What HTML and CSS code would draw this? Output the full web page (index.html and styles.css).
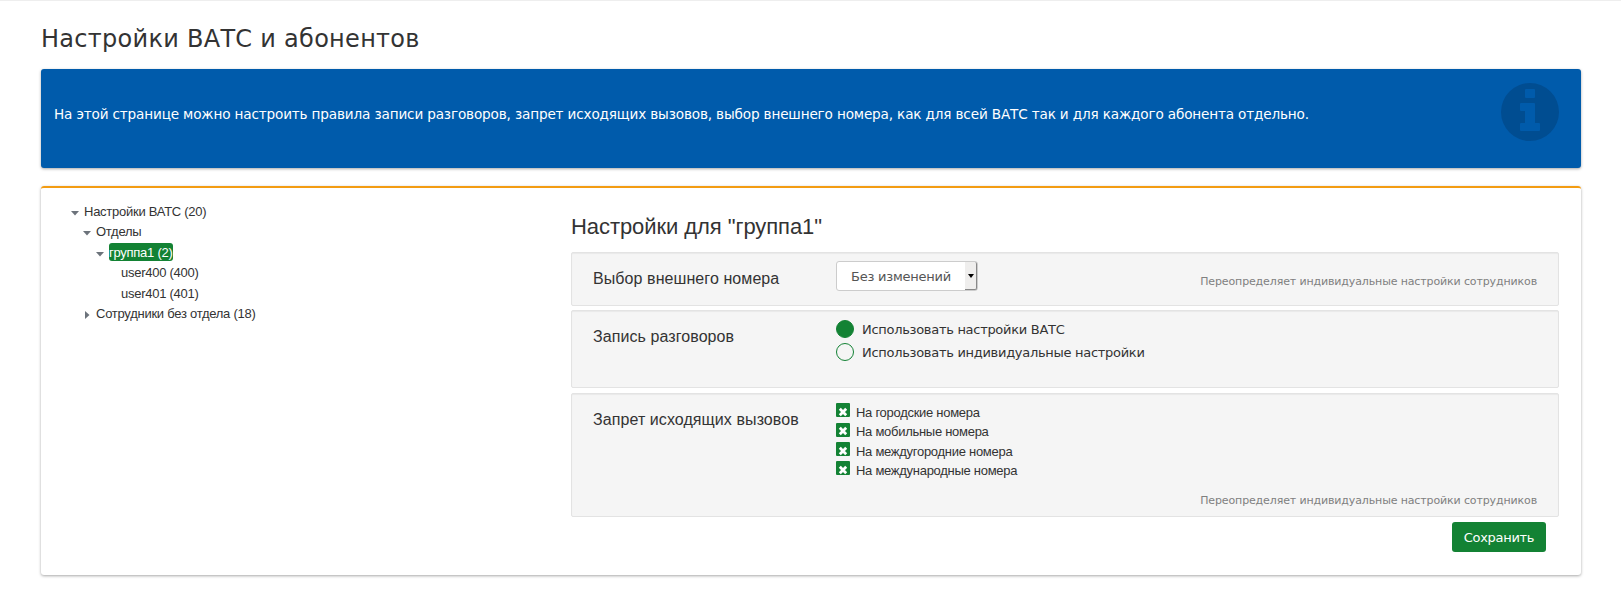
FILE: index.html
```html
<!DOCTYPE html>
<html lang="ru">
<head>
<meta charset="utf-8">
<title>Настройки ВАТС и абонентов</title>
<link rel="stylesheet" href="styles.css">
</head>
<body>
<main class="page">
  <h1 class="page-title">Настройки ВАТС и абонентов</h1>
  <section class="info">
    <p class="info-text">На этой странице можно настроить правила записи разговоров, запрет исходящих вызовов, выбор внешнего номера, как для всей ВАТС так и для каждого абонента отдельно.</p>
    <svg class="info-icon" viewBox="0 0 58 58"><path fill-rule="evenodd" d="M29 0a29 29 0 1 0 0 58a29 29 0 1 0 0-58zM25 6h8q1 0 1 1v7q0 1-1 1h-8q-1 0-1-1V7q0-1 1-1zM20 20h13q1 0 1 1v19h4q1 0 1 1v6q0 1-1 1H20q-1 0-1-1v-6q0-1 1-1h4V28h-4q-1 0-1-1v-6q0-1 1-1z"/></svg>
  </section>
  <section class="panel">
    <ul class="tree">
      <li class="node"><svg class="arrow" viewBox="0 0 8 10"><path d="M0 3h8L4 7.5z"/></svg><span>Настройки ВАТС (20)</span></li>
      <li class="node level-1"><svg class="arrow" viewBox="0 0 8 10"><path d="M0 3h8L4 7.5z"/></svg><span>Отделы</span></li>
      <li class="node level-2"><svg class="arrow" viewBox="0 0 8 10"><path d="M0 3h8L4 7.5z"/></svg><span class="selected">группа1 (2)</span></li>
      <li class="node level-3"><span>user400 (400)</span></li>
      <li class="node level-3"><span>user401 (401)</span></li>
      <li class="node level-1"><svg class="arrow" viewBox="0 0 8 10"><path d="M2 1v8l4.5-4z"/></svg><span>Сотрудники без отдела (18)</span></li>
    </ul>
    <div class="settings">
      <h2 class="settings-title">Настройки для "группа1"</h2>
      <div class="well number">
        <h3 class="label">Выбор внешнего номера</h3>
        <div class="select"><span class="select-text">Без изменений</span><span class="select-button"><svg class="caret" viewBox="0 0 6 4"><path d="M0 0h6L3 4z"/></svg></span></div>
        <p class="note">Переопределяет индивидуальные настройки сотрудников</p>
      </div>
      <div class="well record">
        <h3 class="label">Запись разговоров</h3>
        <div class="radios">
          <div class="radio"><i class="dot on"></i><span>Использовать настройки ВАТС</span></div>
          <div class="radio"><i class="dot"></i><span>Использовать индивидуальные настройки</span></div>
        </div>
      </div>
      <div class="well deny">
        <h3 class="label">Запрет исходящих вызовов</h3>
        <div class="checks">
          <div class="check"><svg class="box" viewBox="0 0 14 14"><path d="M3.8 5.8l6.4 6.4M10.2 5.8l-6.4 6.4"/></svg><span>На городские номера</span></div>
          <div class="check"><svg class="box" viewBox="0 0 14 14"><path d="M3.8 4.8l6.4 6.4M10.2 4.8l-6.4 6.4"/></svg><span>На мобильные номера</span></div>
          <div class="check"><svg class="box" viewBox="0 0 14 14"><path d="M3.8 5.8l6.4 6.4M10.2 5.8l-6.4 6.4"/></svg><span>На междугородние номера</span></div>
          <div class="check"><svg class="box" viewBox="0 0 14 14"><path d="M3.8 5.8l6.4 6.4M10.2 5.8l-6.4 6.4"/></svg><span>На международные номера</span></div>
        </div>
        <p class="note">Переопределяет индивидуальные настройки сотрудников</p>
      </div>
      <button class="save">Сохранить</button>
    </div>
  </section>
</main>
</body>
</html>
```

FILE: styles.css
```css
* { box-sizing: border-box; }
body {
  margin: 0;
  background: #fff;
  color: #333;
  font: 13px/20px "DejaVu Sans", sans-serif;
}
h1, h2, h3, p, ul { margin: 0; padding: 0; font-weight: 400; }
.page {
  height: 615px;
  padding: 23px 40px 0 41px;
  border-top: 1px solid #eee;
}
.page-title { height: 45px; font-size: 24px; line-height: 30px; letter-spacing: .28px; }
.info {
  display: flex;
  justify-content: space-between;
  height: 99px;
  padding: 14px 22px 0 13px;
  border-radius: 3px;
  background: #005bab;
  box-shadow: 0 1px 3px rgba(0, 0, 0, .35);
  color: #fff;
}
.info-text { padding-top: 21px; font-size: 13.6px; letter-spacing: -.155px; white-space: nowrap; }
.info-icon { width: 58px; height: 58px; fill: #004d91; }
.panel {
  display: flex;
  height: 389px;
  margin-top: 18px;
  padding: 0 22px 0 30px;
  border-top: 2px solid #f39c12;
  border-radius: 3px;
  box-shadow: 0 1px 3px rgba(0, 0, 0, .35);
}
.tree {
  width: 500px;
  padding-top: 14px;
  list-style: none;
  font: 13px/20px "Liberation Sans", Arial, sans-serif;
  letter-spacing: -.26px;
}
.node { display: flex; align-items: center; gap: 5px; height: 20px; }
.node:nth-child(even) { margin-bottom: 1px; }
.level-1 { padding-left: 12px; }
.level-2 { padding-left: 25px; }
.level-3 { padding-left: 50px; }
.arrow { width: 8px; height: 10px; margin-top: 2px; fill: #6c737b; }
.selected {
  height: 18px;
  margin-top: -2px;
  border-radius: 3px;
  background: #138234;
  color: #fff;
}
.settings { display: flex; flex: 1; flex-direction: column; padding-top: 24px; }
.settings-title {
  height: 40px;
  font: 22px/30px "Liberation Sans", Arial, sans-serif;
  letter-spacing: -.07px;
}
.well {
  display: flex;
  align-items: flex-start;
  padding: 0 21px;
  border: 1px solid #e3e3e3;
  border-radius: 2px;
  background: #f5f5f5;
  box-shadow: inset 0 1px 1px rgba(0, 0, 0, .05);
}
.number { height: 54px; }
.record { height: 78px; margin-top: 4px; }
.deny { height: 124px; margin-top: 5px; }
.label {
  width: 243px;
  padding-top: 15px;
  font: 16px/22px "Liberation Sans", Arial, sans-serif;
  letter-spacing: .08px;
}
.select {
  display: flex;
  justify-content: space-between;
  width: 142px;
  height: 30px;
  margin-top: 8px;
  padding-left: 14px;
  border: 1px solid #ccc;
  border-radius: 3px;
  background: #fff;
  color: #555;
  line-height: 29px;
  letter-spacing: -.23px;
}
.select-button {
  display: flex;
  align-items: center;
  justify-content: center;
  width: 12px;
  border-right: 1px solid #888;
  border-bottom: 1px solid #888;
  border-radius: 0 2px 2px 0;
  background: #efeeed;
}
.caret { width: 6px; height: 4px; }
.note {
  margin-left: auto;
  color: #808080;
  font-size: 11px;
  line-height: 16px;
  letter-spacing: -.13px;
}
.number .note { padding-top: 21px; }
.deny .note { padding-top: 99px; }
.radios { padding-top: 9px; letter-spacing: -.29px; }
.radio { display: flex; gap: 8px; height: 23px; line-height: 20px; }
.dot { width: 18px; height: 18px; border: 1px solid #138234; border-radius: 50%; }
.on { background: #138234; }
.checks { padding-top: 9px; letter-spacing: -.28px; }
.check {
  display: flex;
  gap: 6px;
  height: 19px;
  font: 13px/19px "Liberation Sans", Arial, sans-serif;
}
.check:first-child { height: 20px; }
.check:nth-child(2) span { margin-top: -1px; }
.box {
  width: 14px;
  height: 14px;
  border-radius: 1px;
  background: #138234;
  fill: none;
  stroke: #fff;
  stroke-width: 2.8;
}
.save {
  align-self: flex-end;
  width: 94px;
  height: 30px;
  margin: 5px 13px 0 0;
  padding: 1px 0 0;
  border: 0;
  border-radius: 3px;
  background: #138234;
  color: #fff;
  font: 13px/30px "DejaVu Sans", sans-serif;
  letter-spacing: -.3px;
}
```
